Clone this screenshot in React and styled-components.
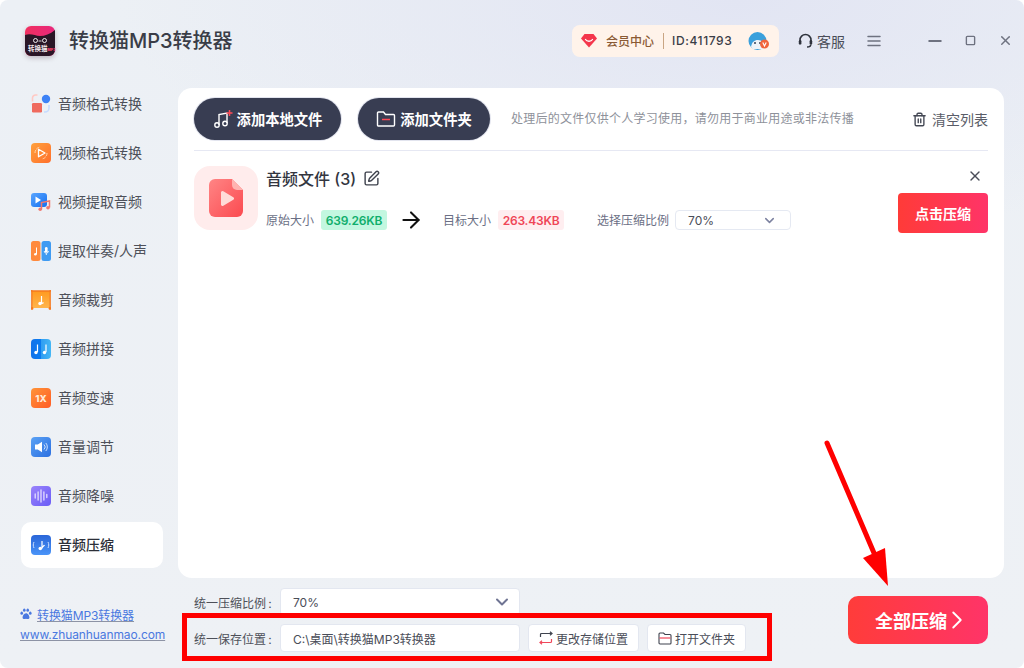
import styled, { createGlobalStyle } from 'styled-components';
import { LuTrash2, LuSquarePen, LuX, LuChevronDown, LuChevronRight, LuMenu, LuMinus, LuSquare, LuArrowRight } from 'react-icons/lu';

const GlobalStyle = createGlobalStyle`
    * { box-sizing: border-box; }
    html, body { margin: 0; padding: 0; background: #fff; }
    body {
        font-family: Inter, "Noto Sans CJK SC", "Noto Sans", sans-serif;
        color: #4a4d58;
    }
`;

function FormatIcon() {
    return (
        <Svg viewBox="0 0 20 20">
            <path d="M1.500 7.500V4a3 3 0 0 1 3-3h2" fill="none" stroke="#ffc9c4" strokeWidth="1.600" />
            <circle cx="15" cy="5" r="4.200" fill="#3d82f6" />
            <rect x="1" y="9" width="10" height="9.500" rx="1.200" fill="#ef6a5e" />
            <path d="M18 11v3a4 4 0 0 1-4 4h-1" fill="none" stroke="#c5dbff" strokeWidth="1.600" />
        </Svg>
    );
}

function VideoFormatIcon() {
    return (
        <Svg viewBox="0 0 20 20">
            <defs>
                <linearGradient id="orangeA" x1="0" y1="0" x2="1" y2="1">
                    <stop offset="0" stopColor="#ffa13c" />
                    <stop offset="1" stopColor="#ff6f2c" />
                </linearGradient>
            </defs>
            <rect width="20" height="20" rx="4" fill="url(#orangeA)" />
            <path d="M4 10a6 6 0 0 1 5-6M16 10a6 6 0 0 1-5 6" fill="none" stroke="#ffd7b0" strokeWidth="1" strokeDasharray="3 1" />
            <path d="M7.500 6.200 14 10l-6.500 3.800z" fill="none" stroke="#fff" strokeWidth="1.300" strokeLinejoin="round" />
        </Svg>
    );
}

function ExtractIcon() {
    return (
        <Svg viewBox="0 0 20 20">
            <defs>
                <linearGradient id="blueA" x1="0" y1="0" x2="1" y2="1">
                    <stop offset="0" stopColor="#5aa6ff" />
                    <stop offset="1" stopColor="#1470f0" />
                </linearGradient>
            </defs>
            <rect y="1" width="16" height="14" rx="3" fill="url(#blueA)" />
            <path d="M4.500 4.500 10 8l-5.500 3.500z" fill="#fff" />
            <path d="M10.500 17V10.500l8-1.500v6.500" fill="none" stroke="#f2786e" strokeWidth="1.500" />
            <circle cx="9.200" cy="17.300" r="1.800" fill="#f2786e" />
            <circle cx="17" cy="15.800" r="1.800" fill="#f2786e" />
        </Svg>
    );
}

function VocalIcon() {
    return (
        <Svg viewBox="0 0 20 20">
            <rect width="9.500" height="20" rx="2.500" fill="#ff8a3d" />
            <rect x="10.500" width="9.500" height="20" rx="2.500" fill="#3f9bf2" />
            <path d="M5.500 6.500V13" stroke="#fff" strokeWidth="1" />
            <circle cx="4.400" cy="13.200" r="1.300" fill="#fff" />
            <rect x="14" y="6" width="2.600" height="5.500" rx="1.300" fill="#fff" />
            <path d="M13.200 10a2.100 2.100 0 0 0 4.200 0M15.300 12.300V14" fill="none" stroke="#fff" strokeWidth=".9" />
        </Svg>
    );
}

function CutIcon() {
    return (
        <Svg viewBox="0 0 20 20">
            <defs>
                <linearGradient id="orangeB" x1="0" y1="0" x2="0" y2="1">
                    <stop offset="0" stopColor="#ff9a1f" />
                    <stop offset="1" stopColor="#ffb54d" />
                </linearGradient>
            </defs>
            <rect x="1" y="1" width="18" height="17" fill="url(#orangeB)" />
            <path d="M.8 0v18.500M19.200 0v18.500M0 1h20" stroke="#f5791f" strokeWidth="1.300" fill="none" />
            <circle cx="1" cy="18.500" r="1.400" fill="#f5791f" />
            <circle cx="19" cy="18.500" r="1.400" fill="#f5791f" />
            <path d="M10.500 6V13.500c1-.5 2-.5 2-1" stroke="#fff" strokeWidth="1.200" fill="none" />
            <circle cx="9" cy="13.500" r="1.700" fill="#fff" />
        </Svg>
    );
}

function JoinIcon() {
    return (
        <Svg viewBox="0 0 20 20">
            <defs>
                <linearGradient id="blueB" x1="0" y1="0" x2="1" y2="0">
                    <stop offset="0" stopColor="#1273ea" />
                    <stop offset=".5" stopColor="#0a7bf0" />
                    <stop offset=".5" stopColor="#2f9df2" />
                    <stop offset="1" stopColor="#45b7f5" />
                </linearGradient>
            </defs>
            <rect width="20" height="20" rx="4" fill="url(#blueB)" />
            <path d="M6.500 5.500V13M15 5.500V13" stroke="#fff" strokeWidth="1.200" />
            <circle cx="5" cy="13.500" r="1.700" fill="#fff" />
            <circle cx="13.500" cy="13.500" r="1.700" fill="#fff" />
        </Svg>
    );
}

function SpeedIcon() {
    return (
        <Svg viewBox="0 0 20 20">
            <defs>
                <linearGradient id="orangeC" x1="0" y1="0" x2="1" y2="1">
                    <stop offset="0" stopColor="#ff9438" />
                    <stop offset="1" stopColor="#ff5c26" />
                </linearGradient>
            </defs>
            <rect width="20" height="20" rx="4" fill="url(#orangeC)" />
            <text x="10" y="14" textAnchor="middle" fontSize="9.500" fontWeight="800" fill="#ffe9d6" fontFamily="Inter, sans-serif">1X</text>
        </Svg>
    );
}

function VolumeIcon() {
    return (
        <Svg viewBox="0 0 20 20">
            <defs>
                <linearGradient id="blueC" x1="0" y1="0" x2="1" y2="1">
                    <stop offset="0" stopColor="#5ba2f5" />
                    <stop offset="1" stopColor="#2b6fe0" />
                </linearGradient>
            </defs>
            <rect width="20" height="20" rx="4" fill="url(#blueC)" />
            <path d="M4 7.500h2.800L11 4.800v10.400L6.800 12.500H4z" fill="#fff" />
            <path d="M13 7.500a3.500 3.500 0 0 1 0 5M14.800 6a6 6 0 0 1 0 8" fill="none" stroke="#cfe2ff" strokeWidth="1" />
        </Svg>
    );
}

function DenoiseIcon() {
    return (
        <Svg viewBox="0 0 20 20">
            <defs>
                <linearGradient id="purpleA" x1="0" y1="0" x2="1" y2="1">
                    <stop offset="0" stopColor="#9a83fb" />
                    <stop offset="1" stopColor="#6a5cf6" />
                </linearGradient>
            </defs>
            <rect width="20" height="20" rx="4" fill="url(#purpleA)" />
            <path d="M4.200 8v4M7.100 6v8M10 4v12M12.900 6v8M15.800 8.500v3" stroke="#e4defe" strokeWidth="1.300" strokeLinecap="round" />
        </Svg>
    );
}

function CompressIcon() {
    return (
        <Svg viewBox="0 0 20 20">
            <defs>
                <linearGradient id="blueD" x1="0" y1="0" x2="0" y2="1">
                    <stop offset="0" stopColor="#2a66d8" />
                    <stop offset="1" stopColor="#4a94f8" />
                </linearGradient>
            </defs>
            <rect width="20" height="20" rx="4" fill="url(#blueD)" />
            <path d="M11 6V13.500c0-2 2-2.500 2.500-3.500" stroke="#fff" strokeWidth="1.200" fill="none" />
            <circle cx="9.300" cy="13.500" r="1.800" fill="#fff" />
            <path d="M3 7c-1 2-1 4 0 6M17 7c1 2 1 4 0 6" stroke="#cfe0ff" strokeWidth="1" fill="none" />
        </Svg>
    );
}

const navItems = [
    { label: '音频格式转换', Icon: FormatIcon },
    { label: '视频格式转换', Icon: VideoFormatIcon },
    { label: '视频提取音频', Icon: ExtractIcon },
    { label: '提取伴奏/人声', Icon: VocalIcon },
    { label: '音频裁剪', Icon: CutIcon },
    { label: '音频拼接', Icon: JoinIcon },
    { label: '音频变速', Icon: SpeedIcon },
    { label: '音量调节', Icon: VolumeIcon },
    { label: '音频降噪', Icon: DenoiseIcon },
    { label: '音频压缩', Icon: CompressIcon, active: true },
];

function App() {
    return (
        <>
            <GlobalStyle />
            <Window>
                <Header>
                    <Brand>
                        <Logo>
                            <svg viewBox="0 0 30 30" width="30" height="30">
                                <defs>
                                    <linearGradient id="logoBg" x1="0" y1="0" x2="1" y2="0">
                                        <stop offset="0" stopColor="#f0305f" />
                                        <stop offset="1" stopColor="#e8277c" />
                                    </linearGradient>
                                </defs>
                                <rect width="30" height="30" rx="6" fill="url(#logoBg)" />
                                <path d="M0 9c6-2 10 1 15 1s10-2 15-6v20a6 6 0 0 1-6 6H6a6 6 0 0 1-6-6z" fill="#2a1626" />
                                <circle cx="10.500" cy="14.500" r="2" fill="none" stroke="#fff" strokeWidth=".9" />
                                <circle cx="19.500" cy="14.500" r="2" fill="none" stroke="#fff" strokeWidth=".9" />
                                <path d="M13.500 15h3" stroke="#fff" strokeWidth=".8" />
                            </svg>
                            <LogoText>转换猫<b>MP3</b></LogoText>
                        </Logo>
                        <Title>转换猫MP3转换器</Title>
                    </Brand>
                    <HeaderRight>
                        <MemberPill>
                            <svg viewBox="0 0 16 14" width="16" height="14">
                                <path d="M3.500 0h9L16 4.500 8 13.500 0 4.500z" fill="#f4364c" />
                                <path d="M4.500 5.500c1.500 2.300 5.500 2.300 7 0" fill="none" stroke="#fff" strokeWidth="1.300" strokeLinecap="round" />
                            </svg>
                            <MemberLink>会员中心</MemberLink>
                            <PillDivider />
                            <MemberId>ID:411793</MemberId>
                            <svg viewBox="0 0 22 20" width="22" height="20">
                                <circle cx="9.500" cy="10" r="9" fill="#3aa0dc" />
                                <path d="M3 16c1-5 3-7 7-7s6 3 6 9H5z" fill="#eef4f8" />
                                <circle cx="7" cy="12" r="1" fill="#34435a" />
                                <circle cx="12" cy="12" r="1" fill="#34435a" />
                                <circle cx="16.500" cy="13" r="4.500" fill="#f0643c" />
                                <path d="M14.800 11.500l1.700 3.400 1.700-3.400" fill="none" stroke="#fff" strokeWidth="1.100" />
                            </svg>
                        </MemberPill>
                        <Service>
                            <svg viewBox="0 0 15 15" width="15" height="15">
                                <path d="M2 8.500V7a5.500 5.500 0 0 1 11 0v1.500" fill="none" stroke="#2f333d" strokeWidth="1.600" />
                                <rect x=".8" y="7" width="2.600" height="4.600" rx="1.200" fill="#2f333d" />
                                <rect x="11.600" y="7" width="2.600" height="4.600" rx="1.200" fill="#2f333d" />
                                <path d="M12.800 11.500c0 1.800-1.500 2.500-3.800 2.500" fill="none" stroke="#2f333d" strokeWidth="1.400" />
                            </svg>
                            客服
                        </Service>
                        <HeaderIcon $ml={20}><LuMenu size={18} strokeWidth={2} /></HeaderIcon>
                        <HeaderIcon $ml={42}><LuMinus size={20} strokeWidth={2.2} /></HeaderIcon>
                        <HeaderIcon $ml={20}><LuSquare size={11} strokeWidth={3} /></HeaderIcon>
                        <HeaderIcon $ml={22}><LuX size={15} strokeWidth={2.4} /></HeaderIcon>
                    </HeaderRight>
                </Header>
                <Body>
                    <Sidebar>
                        <Nav>
                            {navItems.map(({ label, Icon, active }) => (
                                <NavItem key={label} $active={active}>
                                    <Icon />
                                    <NavLabel>{label}</NavLabel>
                                </NavItem>
                            ))}
                        </Nav>
                        <SiteInfo>
                            <SiteLink>
                                <svg viewBox="0 0 14 14" width="12" height="12">
                                    <ellipse cx="2" cy="6" rx="1.500" ry="2" fill="#4a78e0" />
                                    <ellipse cx="5" cy="2.500" rx="1.500" ry="2" fill="#4a78e0" />
                                    <ellipse cx="9" cy="2.500" rx="1.500" ry="2" fill="#4a78e0" />
                                    <ellipse cx="12" cy="6" rx="1.500" ry="2" fill="#4a78e0" />
                                    <path d="M7 6c2.500 0 4 3 4 5s-2 2-4 1.500C5 13 3 13 3 11s1.500-5 4-5z" fill="#4a78e0" />
                                </svg>
                                <u>转换猫MP3转换器</u>
                            </SiteLink>
                            <SiteLink><u>www.zhuanhuanmao.com</u></SiteLink>
                        </SiteInfo>
                    </Sidebar>
                    <Content>
                        <Panel>
                            <Toolbar>
                                <DarkButton $width={147}>
                                    <svg viewBox="0 0 20 20" width="20" height="20">
                                        <path d="M6 16V5.500l8-1.500v10" fill="none" stroke="#fff" strokeWidth="1.400" />
                                        <circle cx="4" cy="16" r="2.200" fill="none" stroke="#fff" strokeWidth="1.400" />
                                        <circle cx="12" cy="14.500" r="2.200" fill="none" stroke="#fff" strokeWidth="1.400" />
                                        <path d="M16.500 1v6M13.500 4h6" stroke="#ff4a55" strokeWidth="1.500" />
                                    </svg>
                                    <ButtonLabel>添加本地文件</ButtonLabel>
                                </DarkButton>
                                <DarkButton $width={132}>
                                    <svg viewBox="0 0 20 18" width="20" height="18">
                                        <path d="M1.500 15V3a1 1 0 0 1 1-1h5l2 2.500h8a1 1 0 0 1 1 1V15a1 1 0 0 1-1 1h-15a1 1 0 0 1-1-1z" fill="none" stroke="#fff" strokeWidth="1.400" />
                                        <path d="M6 9.500h8" stroke="#ff4a55" strokeWidth="1.500" />
                                    </svg>
                                    <ButtonLabel>添加文件夹</ButtonLabel>
                                </DarkButton>
                                <Hint>处理后的文件仅供个人学习使用，请勿用于商业用途或非法传播</Hint>
                                <ClearButton>
                                    <LuTrash2 size={15} color="#444854" strokeWidth={2.2} />
                                    清空列表
                                </ClearButton>
                            </Toolbar>
                            <FileRow>
                                <FileThumb>
                                    <svg viewBox="0 0 34 38" width="34" height="38">
                                        <defs>
                                            <linearGradient id="docBg" x1="0" y1="0" x2="1" y2="1">
                                                <stop offset="0" stopColor="#ff8585" />
                                                <stop offset="1" stopColor="#fb4a50" />
                                            </linearGradient>
                                        </defs>
                                        <path d="M6 0h17l11 11v21a6 6 0 0 1-6 6H6a6 6 0 0 1-6-6V6a6 6 0 0 1 6-6z" fill="url(#docBg)" />
                                        <path d="M23 0l11 11h-6a5 5 0 0 1-5-5z" fill="#ffb3b0" />
                                        <path d="M12 13.500a1.500 1.500 0 0 1 2.300-1.300l10 6a1.500 1.500 0 0 1 0 2.600l-10 6a1.500 1.500 0 0 1-2.300-1.300z" fill="#ffdcd8" />
                                    </svg>
                                </FileThumb>
                                <FileInfo>
                                    <FileName>
                                        <FileNameText>音频文件 (3)</FileNameText>
                                        <LuSquarePen size={17} color="#3f434e" />
                                    </FileName>
                                    <FileMeta>
                                        <MetaLabel>原始大小</MetaLabel>
                                        <SizeTag $tone="green">639.26KB</SizeTag>
                                        <ArrowSlot><LuArrowRight size={26} color="#111" strokeWidth={1.9} /></ArrowSlot>
                                        <MetaLabel>目标大小</MetaLabel>
                                        <SizeTag $tone="red">263.43KB</SizeTag>
                                        <MetaLabel $ml={33}>选择压缩比例</MetaLabel>
                                        <RowSelect>
                                            70%
                                            <LuChevronDown size={15} color="#7d82a0" strokeWidth={2.4} />
                                        </RowSelect>
                                    </FileMeta>
                                </FileInfo>
                                <FileActions>
                                    <LuX size={16} color="#4a4d58" strokeWidth={2} />
                                    <RedButton>点击压缩</RedButton>
                                </FileActions>
                            </FileRow>
                        </Panel>
                        <BottomBar>
                            <Settings>
                                <SettingRow>
                                    <SettingLabel>统一压缩比例&#8201;:</SettingLabel>
                                    <Field>
                                        70%
                                        <LuChevronDown size={20} color="#6f7493" strokeWidth={2.4} />
                                    </Field>
                                </SettingRow>
                                <SettingRow>
                                    <SettingLabel>统一保存位置&#8201;:</SettingLabel>
                                    <Field>C:\桌面\转换猫MP3转换器</Field>
                                    <SmallButton $width={111}>
                                        <svg viewBox="0 0 14 14" width="14" height="14">
                                            <path d="M1.500 6V3.500a1 1 0 0 1 1-1h10" fill="none" stroke="#3f434e" strokeWidth="1.200" />
                                            <path d="M11 .8l2 1.700-2 1.700" fill="none" stroke="#3f434e" strokeWidth="1.200" />
                                            <path d="M12.500 8v2.500a1 1 0 0 1-1 1h-10" fill="none" stroke="#f0475a" strokeWidth="1.200" />
                                            <path d="M3 9.800l-2 1.700 2 1.700" fill="none" stroke="#f0475a" strokeWidth="1.200" />
                                        </svg>
                                        更改存储位置
                                    </SmallButton>
                                    <SmallButton $width={99}>
                                        <svg viewBox="0 0 14 13" width="14" height="13">
                                            <path d="M1 11V2a1 1 0 0 1 1-1h3.500l1.500 1.500h5a1 1 0 0 1 1 1V11a1 1 0 0 1-1 1H2a1 1 0 0 1-1-1z" fill="none" stroke="#3f434e" strokeWidth="1.100" />
                                            <path d="M1.500 6h11" stroke="#f0475a" strokeWidth="1.200" />
                                        </svg>
                                        打开文件夹
                                    </SmallButton>
                                </SettingRow>
                            </Settings>
                            <CompressAll>
                                全部压缩
                                <LuChevronRight size={30} strokeWidth={1.5} />
                            </CompressAll>
                        </BottomBar>
                    </Content>
                </Body>
                <RedBox />
                <RedArrow viewBox="0 0 75 152" width="75" height="152">
                    <path d="M7 5 54 115" stroke="#f00" strokeWidth="5" strokeLinecap="round" />
                    <path d="M68 148 43 120 65 110z" fill="#f00" />
                </RedArrow>
            </Window>
        </>
    );
}

const Svg = styled.svg`
    width: 20px;
    height: 20px;
    flex: none;
`;

const Window = styled.div`
    position: relative;
    width: 1024px;
    height: 668px;
    overflow: hidden;
    border-radius: 8px;
    background:
        radial-gradient(ellipse 620px 240px at 72% 0, #e2e5f3 0%, rgba(226, 229, 243, 0) 100%),
        linear-gradient(180deg, #ecf0f5, #eef1f5);
`;

const Header = styled.div`
    height: 81px;
    display: flex;
    align-items: center;
    justify-content: space-between;
    padding: 0 11px 0 25px;
`;

const Brand = styled.div`
    display: flex;
    align-items: center;
    gap: 14px;
`;

const Logo = styled.div`
    position: relative;
    width: 30px;
    height: 30px;
    box-shadow: 0 2px 5px rgba(60, 20, 40, 0.25);
    border-radius: 6px;
`;

const LogoText = styled.span`
    position: absolute;
    left: 3px;
    bottom: 2px;
    font-size: 6.5px;
    line-height: 8px;
    font-weight: 700;
    color: #f4e8ea;
    white-space: nowrap;
    b {
        font-size: 3.5px;
        color: #f0406a;
    }
`;

const Title = styled.div`
    margin-top: -2px;
    font-size: 20px;
    font-weight: 500;
    color: #3a3d47;
`;

const HeaderRight = styled.div`
    display: flex;
    align-items: center;
`;

const MemberPill = styled.div`
    width: 207px;
    height: 32px;
    display: flex;
    align-items: center;
    padding-left: 9px;
    background: #fff3ea;
    border-radius: 8px;
`;

const MemberLink = styled.span`
    margin-left: 9px;
    font-size: 12px;
    font-weight: 500;
    color: #8a5a34;
`;

const PillDivider = styled.span`
    width: 1px;
    height: 16px;
    margin: 0 8px 0 9px;
    background: #c9a583;
`;

const MemberId = styled.span`
    width: 76px;
    font-size: 12px;
    font-weight: 500;
    letter-spacing: 0.6px;
    color: #3a3d47;
`;

const Service = styled.div`
    display: flex;
    align-items: center;
    gap: 4px;
    margin-left: 19px;
    font-size: 14px;
    color: #4a4d58;
`;

const HeaderIcon = styled.div`
    display: flex;
    align-items: center;
    justify-content: center;
    margin-left: ${(p) => p.$ml}px;
    color: #6e7280;
`;

const Body = styled.div`
    display: flex;
    height: 587px;
`;

const Sidebar = styled.div`
    width: 178px;
    flex: none;
    padding-left: 21px;
    display: flex;
    flex-direction: column;
`;

const Nav = styled.div`
    width: 142px;
    display: flex;
    flex-direction: column;
    gap: 3px;
`;

const NavItem = styled.div`
    height: 46px;
    display: flex;
    align-items: center;
    gap: 7px;
    padding-left: 10px;
    font-size: 14px;
    white-space: nowrap;
    border-radius: 10px;
    color: ${(p) => (p.$active ? '#2c2f38' : '#4d5059')};
    font-weight: ${(p) => (p.$active ? 500 : 400)};
    background: ${(p) => (p.$active ? '#fff' : 'transparent')};
`;

const NavLabel = styled.span`
    margin-top: -2px;
`;

const SiteInfo = styled.div`
    margin: 37px 0 0 -1px;
    display: flex;
    flex-direction: column;
    gap: 2px;
`;

const SiteLink = styled.div`
    height: 18px;
    display: flex;
    align-items: center;
    gap: 5px;
    font-size: 12px;
    letter-spacing: -0.1px;
    white-space: nowrap;
    color: #4a78e0;
    u {
        text-decoration-color: #8d93a5;
    }
`;

const Content = styled.div`
    flex: 1;
    padding: 7px 20px 0 0;
`;

const Panel = styled.div`
    height: 490px;
    padding: 10px 16px 0;
    background: #fff;
    border-radius: 14px;
`;

const Toolbar = styled.div`
    height: 53px;
    display: flex;
    align-items: flex-start;
    border-bottom: 1px solid #e6e8f3;
`;

const DarkButton = styled.div`
    width: ${(p) => p.$width}px;
    height: 42px;
    margin-right: 17px;
    display: flex;
    align-items: center;
    justify-content: center;
    gap: 4px;
    flex: none;
    font-size: 14.3px;
    font-weight: 700;
    color: #fff;
    background: #383d52;
    border-radius: 21px;
    box-shadow: 0 0 0 1px #e2e4ee;
`;

const ButtonLabel = styled.span`
    margin-top: -2px;
`;

const Hint = styled.div`
    margin-left: 4px;
    height: 42px;
    line-height: 42px;
    font-size: 12px;
    letter-spacing: 0.25px;
    color: #8e919a;
    white-space: nowrap;
`;

const ClearButton = styled.div`
    margin-left: auto;
    height: 42px;
    display: flex;
    align-items: center;
    gap: 5px;
    font-size: 14px;
    color: #5a5d68;
`;

const FileRow = styled.div`
    display: flex;
    padding-top: 15px;
`;

const FileThumb = styled.div`
    width: 64px;
    height: 64px;
    flex: none;
    display: flex;
    align-items: center;
    justify-content: center;
    background: #ffecec;
    border-radius: 16px;
`;

const FileInfo = styled.div`
    margin-left: 8px;
    display: flex;
    flex-direction: column;
    gap: 19px;
`;

const FileName = styled.div`
    height: 25px;
    display: flex;
    align-items: center;
    gap: 7px;
    font-size: 16px;
    font-weight: 500;
    color: #33363f;
`;

const FileNameText = styled.span`
    margin-top: -2px;
`;

const FileMeta = styled.div`
    height: 20px;
    display: flex;
    align-items: center;
`;

const MetaLabel = styled.span`
    margin-left: ${(p) => p.$ml || 0}px;
    margin-top: -2px;
    font-size: 12px;
    color: #6b6f85;
    white-space: nowrap;
`;

const SizeTag = styled.span`
    width: 66px;
    height: 20px;
    margin-left: 7px;
    display: flex;
    align-items: center;
    justify-content: center;
    font-size: 12px;
    font-weight: 600;
    letter-spacing: -0.2px;
    border-radius: 3px;
    color: ${(p) => (p.$tone === 'green' ? '#0fae6c' : '#ef4657')};
    background: ${(p) => (p.$tone === 'green' ? '#c3f7e0' : '#ffeef0')};
`;

const ArrowSlot = styled.span`
    width: 56px;
    margin-left: -4px;
    margin-right: 4px;
    display: flex;
    justify-content: center;
`;

const RowSelect = styled.div`
    width: 116px;
    height: 20px;
    margin-left: 6px;
    padding: 0 13px 0 12px;
    display: flex;
    align-items: center;
    justify-content: space-between;
    font-size: 12px;
    color: #4a4d58;
    background: #fff;
    border: 1px solid #e5e9f2;
    border-radius: 4px;
`;

const FileActions = styled.div`
    margin-left: auto;
    display: flex;
    flex-direction: column;
    align-items: flex-end;
    gap: 9px;
    svg {
        margin: 2px 5px 0 0;
    }
`;

const RedButton = styled.div`
    width: 90px;
    height: 40px;
    display: flex;
    align-items: center;
    justify-content: center;
    font-size: 14px;
    font-weight: 700;
    color: #fff;
    border-radius: 4px;
    background: linear-gradient(90deg, #ff3b38, #ff3468);
`;

const BottomBar = styled.div`
    display: flex;
    align-items: flex-start;
    justify-content: space-between;
    padding: 10px 16px 0;
`;

const Settings = styled.div`
    display: flex;
    flex-direction: column;
    gap: 8px;
`;

const SettingRow = styled.div`
    height: 28px;
    display: flex;
    align-items: center;
    gap: 8px;
`;

const SettingLabel = styled.span`
    width: 78px;
    font-size: 12px;
    color: #4d5059;
    white-space: nowrap;
`;

const Field = styled.div`
    width: 240px;
    height: 28px;
    padding: 0 7px 0 12px;
    display: flex;
    align-items: center;
    justify-content: space-between;
    font-size: 12px;
    color: #4a4d58;
    background: #fff;
    border: 1px solid #e3e7f0;
    border-radius: 4px;
    white-space: nowrap;
`;

const SmallButton = styled.div`
    width: ${(p) => p.$width}px;
    height: 28px;
    display: flex;
    align-items: center;
    justify-content: center;
    gap: 3px;
    font-size: 12px;
    color: #4a4d58;
    background: #fff;
    border: 1px solid #e3e7f0;
    border-radius: 4px;
    white-space: nowrap;
`;

const CompressAll = styled.div`
    width: 140px;
    height: 48px;
    margin-top: 8px;
    padding-left: 27px;
    display: flex;
    align-items: center;
    font-size: 18px;
    font-weight: 700;
    color: #fff;
    border-radius: 10px;
    background: linear-gradient(90deg, #ff3c3a, #ff3468);
    svg {
        margin-left: -5px;
        flex: none;
    }
`;

const RedBox = styled.div`
    position: absolute;
    left: 182px;
    top: 613px;
    width: 590px;
    height: 48px;
    border: 5px solid #f00;
`;

const RedArrow = styled.svg`
    position: absolute;
    left: 820px;
    top: 438px;
`;

export default App;
